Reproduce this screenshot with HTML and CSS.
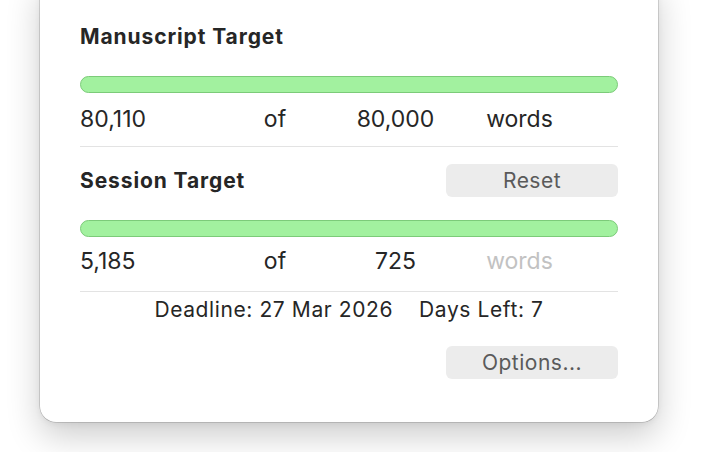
FILE: index.html
```html
<!DOCTYPE html>
<html>
<head>
<meta charset="utf-8">
<link rel="stylesheet" href="styles.css">
</head>
<body>
<div class="window">
  <div class="title manuscript-title">Manuscript Target</div>
  <div class="bar"></div>
  <div class="counts counts-first">
    <span class="c-num">80,110</span>
    <span class="c-of">of</span>
    <span class="c-target">80,000</span>
    <span class="c-unit">words</span>
  </div>
  <div class="divider divider-first"></div>
  <div class="session-head">
    <div class="title">Session Target</div>
    <div class="btn">Reset</div>
  </div>
  <div class="bar bar-second"></div>
  <div class="counts counts-second">
    <span class="c-num">5,185</span>
    <span class="c-of">of</span>
    <span class="c-target">725</span>
    <span class="c-unit dim">words</span>
  </div>
  <div class="divider divider-second"></div>
  <div class="deadline"><span>Deadline: 27 Mar 2026</span><span>Days Left: 7</span></div>
  <div class="footer">
    <div class="btn">Options...</div>
  </div>
</div>
</body>
</html>
```

FILE: styles.css
```css
html, body {
  margin: 0;
  padding: 0;
  background: #ffffff;
}
body {
  width: 702px;
  height: 452px;
  overflow: hidden;
  font-family: "Inter", "Liberation Sans", sans-serif;
  color: #262626;
}
.window {
  box-sizing: border-box;
  margin: -20px 0 0 40px;
  width: 618px;
  padding: 20px 40px 43px;
  background: #ffffff;
  border-radius: 0 0 16px 16px;
  box-shadow: 0 0 0 0.5px rgba(0,0,0,0.25), 0 2px 6px rgba(0,0,0,0.06), 0 14px 34px rgba(0,0,0,0.2);
  display: flex;
  flex-direction: column;
}
.title {
  font-size: 21px;
  font-weight: 700;
  line-height: 26px;
  color: #262626;
  letter-spacing: 0.9px;
}
.manuscript-title {
  margin-top: 24px;
}
.bar {
  box-sizing: border-box;
  height: 17px;
  margin-top: 26px;
  border: 1.5px solid #7ccb79;
  background: #a2f19f;
  border-radius: 9px;
}
.bar-second {
  margin-top: 23px;
}
.counts {
  display: grid;
  grid-template-columns: 150px 90px 151px 97px;
  font-size: 23px;
  line-height: 28px;
  letter-spacing: 0;
}
.counts-first { margin-top: 12px; }
.counts-second { margin-top: 10px; }
.c-of, .c-target, .c-unit {
  text-align: center;
}
.dim {
  color: #c2c2c2;
}
.divider {
  height: 1px;
  background: #e3e3e3;
}
.divider-first { margin-top: 13px; }
.divider-second { margin-top: 16px; }
.session-head {
  margin-top: 17px;
  display: flex;
  justify-content: space-between;
  align-items: center;
}
.btn {
  box-sizing: border-box;
  width: 172px;
  height: 33px;
  border-radius: 6px;
  background: #ececec;
  color: #5a5a5a;
  font-size: 21px;
  line-height: 33px;
  text-align: center;
  letter-spacing: 0.5px;
}
.deadline {
  margin-top: 5px;
  display: flex;
  justify-content: center;
  gap: 26px;
  font-size: 21px;
  line-height: 26px;
  letter-spacing: 0.6px;
}
.footer {
  margin-top: 23px;
  display: flex;
  justify-content: flex-end;
}
```
